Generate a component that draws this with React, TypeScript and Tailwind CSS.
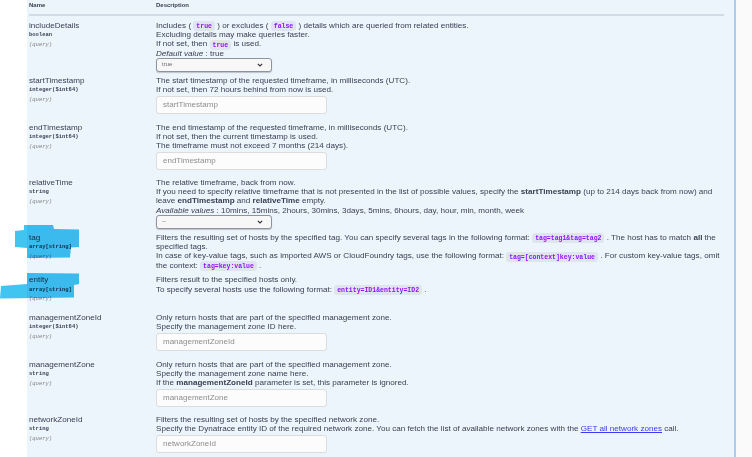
import React from 'react';

const sans = "font-['Liberation_Sans',Arial,sans-serif]";
const mono = "font-['Liberation_Mono','DejaVu_Sans_Mono',monospace]";

function Code({ children }: { children: React.ReactNode }) {
  return (
    <code className={`${mono} px-[3px] py-[1.5px] rounded-[3px] bg-[#0000000f] text-[#9012fe] font-bold text-[6.5px] leading-[0px]`}>
      {children}
    </code>
  );
}

function Select({ value }: { value: string }) {
  return (
    <div className="mt-[-0.5px] w-[116px] h-[14px] flex items-center justify-between pl-[5px] pr-[8px] bg-[#f7f7f7] border border-[#8f939b] rounded-[3px] shadow-[0_1px_1px_rgba(0,0,0,0.2)]">
      <span className="text-[6px] text-[#6b6b6b]">{value}</span>
      <svg width="6" height="4" viewBox="0 0 6 4">
        <path d="M0.8 0.8 L3 3 L5.2 0.8" fill="none" stroke="#333" strokeWidth="1.1" />
      </svg>
    </div>
  );
}

function Input({ placeholder }: { placeholder: string }) {
  return (
    <div className="mt-[1.5px] w-[171px] h-[18px] flex items-center pl-[6px] bg-[#fcfcfc] border border-[#dcdcdc] rounded-[3px]">
      <span className="text-[8px] text-[#8d8d8d]">{placeholder}</span>
    </div>
  );
}

interface RowProps {
  name: string;
  type: string;
  h: string;
  lines: React.ReactNode[];
  control?: React.ReactNode;
}

function Row({ name, type, h, lines, control }: RowProps) {
  return (
    <div className={`flex ${h}`}>
      <div className="w-[127px] shrink-0">
        <div className="text-[8.1px] leading-[9.33px] text-[#3b4151]">{name}</div>
        <div className={`${mono} mt-[1px] text-[5.5px] leading-[7px] font-bold text-[#3b4151]`}>{type}</div>
        <div className={`${mono} mt-[2.5px] text-[5.5px] leading-[7px] italic text-[#808080]`}>(query)</div>
      </div>
      <div className="flex-1">
        {lines.map((l, i) => (
          <div key={i} className="text-[8.1px] leading-[9.33px] whitespace-nowrap text-[#3b4151]">
            {l}
          </div>
        ))}
        {control}
      </div>
    </div>
  );
}

export default function App() {
  return (
    <div className={`${sans} relative w-[752px] h-[457px] overflow-hidden flex bg-[#fafafa]`}>
      <div className="w-[27px] shrink-0 bg-white" />
      <div className="w-[709px] shrink-0 bg-[#ecf4fc] border-r-2 border-[#a9cdf2] pl-[2px] pr-[10px]">
        {/* table header */}
        <div className="h-[11px] flex items-center text-[6px] font-bold text-[#3b4151]">
          <div className="w-[127px]">Name</div>
          <div>Description</div>
        </div>
        <div className="mt-[3px] h-[2px] bg-[#d2dbe5]" />

        <div className="pt-[4.8px]">
          <Row
            name="includeDetails"
            type="boolean"
            h="h-[55px]"
            lines={[
              <>Includes ( <Code>true</Code> ) or excludes ( <Code>false</Code> ) details which are queried from related entities.</>,
              'Excluding details may make queries faster.',
              <>If not set, then <Code>true</Code> is used.</>,
              <><i>Default value</i> : true</>,
            ]}
            control={<Select value="true" />}
          />
          <Row
            name="startTimestamp"
            type="integer($int64)"
            h="h-[47px]"
            lines={[
              'The start timestamp of the requested timeframe, in milliseconds (UTC).',
              'If not set, then 72 hours behind from now is used.',
            ]}
            control={<Input placeholder="startTimestamp" />}
          />
          <Row
            name="endTimestamp"
            type="integer($int64)"
            h="h-[55px]"
            lines={[
              'The end timestamp of the requested timeframe, in milliseconds (UTC).',
              'If not set, then the current timestamp is used.',
              'The timeframe must not exceed 7 months (214 days).',
            ]}
            control={<Input placeholder="endTimestamp" />}
          />
          <Row
            name="relativeTime"
            type="string"
            h="h-[55px]"
            lines={[
              'The relative timeframe, back from now.',
              <>If you need to specify relative timeframe that is not presented in the list of possible values, specify the <b>startTimestamp</b> (up to 214 days back from now) and</>,
              <>leave <b>endTimestamp</b> and <b>relativeTime</b> empty.</>,
              <><i>Available values</i> : 10mins, 15mins, 2hours, 30mins, 3days, 5mins, 6hours, day, hour, min, month, week</>,
            ]}
            control={<Select value="--" />}
          />
          <Row
            name="tag"
            type="array[string]"
            h="h-[42.5px]"
            lines={[
              <>Filters the resulting set of hosts by the specified tag. You can specify several tags in the following format: <Code>tag=tag1&amp;tag=tag2</Code> . The host has to match <b>all</b> the</>,
              'specified tags.',
              <>In case of key-value tags, such as imported AWS or CloudFoundry tags, use the following format: <Code>tag=[context]key:value</Code> . For custom key-value tags, omit</>,
              <>the context: <Code>tag=key:value</Code> .</>,
            ]}
          />
          <Row
            name="entity"
            type="array[string]"
            h="h-[37.5px]"
            lines={[
              'Filters result to the specified hosts only.',
              <>To specify several hosts use the following format: <Code>entity=ID1&amp;entity=ID2</Code> .</>,
            ]}
          />
          <Row
            name="managementZoneId"
            type="integer($int64)"
            h="h-[47px]"
            lines={[
              'Only return hosts that are part of the specified management zone.',
              'Specify the management zone ID here.',
            ]}
            control={<Input placeholder="managementZoneId" />}
          />
          <Row
            name="managementZone"
            type="string"
            h="h-[55px]"
            lines={[
              'Only return hosts that are part of the specified management zone.',
              'Specify the management zone name here.',
              <>If the <b>managementZoneId</b> parameter is set, this parameter is ignored.</>,
            ]}
            control={<Input placeholder="managementZone" />}
          />
          <Row
            name="networkZoneId"
            type="string"
            h="h-[44px]"
            lines={[
              'Filters the resulting set of hosts by the specified network zone.',
              <>Specify the Dynatrace entity ID of the required network zone. You can fetch the list of available network zones with the <a className="text-[#3b3bf0] underline">GET all network zones</a> call.</>,
            ]}
            control={<Input placeholder="networkZoneId" />}
          />
        </div>
      </div>

      {/* highlighter marks over the redacted parameter names */}
      <svg className="absolute left-0 top-0 pointer-events-none mix-blend-multiply" width="752" height="457">
        <polygon
          fill="#40c4f0"
          points="24,225 53,225 54,229 79,229.5 79,247 71,247.5 70,257.5 27,258 27,248 15,247 15,231 24,230"
        />
        <polygon
          fill="#40c4f0"
          points="27,273 79,273.5 79,284 74,285 74,297.5 0,298.5 1,286 27,284"
        />
      </svg>
    </div>
  );
}
